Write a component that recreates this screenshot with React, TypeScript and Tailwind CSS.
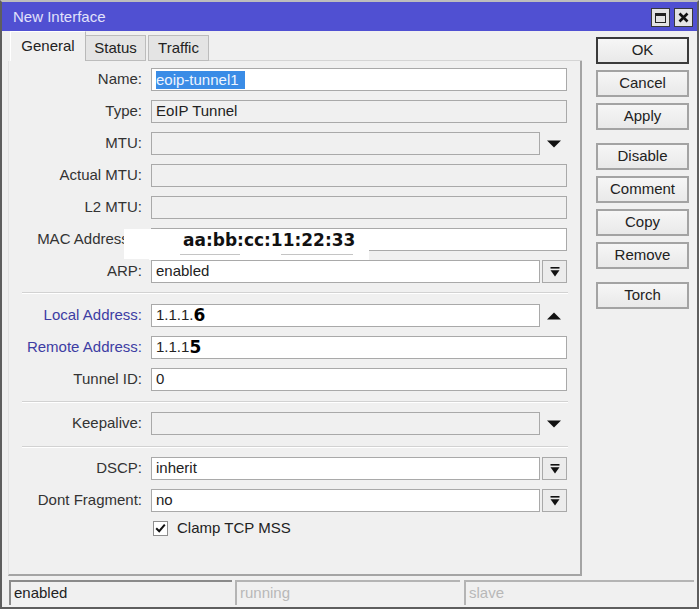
import React from "react";

function DownTri() {
  return (
    <svg width="14" height="8" viewBox="0 0 14 8">
      <path d="M0 0.5H14L7 7.5Z" fill="#111" />
    </svg>
  );
}
function UpTri() {
  return (
    <svg width="14" height="8" viewBox="0 0 14 8">
      <path d="M0 7.5H14L7 0.5Z" fill="#111" />
    </svg>
  );
}
function DblDown() {
  return (
    <svg width="10" height="10" viewBox="0 0 10 10">
      <rect x="0.5" y="0" width="9" height="1.6" fill="#111" />
      <path d="M0.5 3.2H9.5L5 9.5Z" fill="#111" />
    </svg>
  );
}

function Label({ children, blue }: { children: React.ReactNode; blue?: boolean }) {
  return (
    <div
      className={`w-[133px] shrink-0 text-right whitespace-nowrap ${blue ? "text-[#3d3da3]" : "text-[#333]"}`}
    >
      {children}
    </div>
  );
}

function Box({ children, white, narrow }: { children?: React.ReactNode; white?: boolean; narrow?: boolean }) {
  return (
    <div
      className={`${narrow ? "w-[389px]" : "w-[416px]"} h-[23px] border border-[#a9a9a9] ${white ? "bg-white" : "bg-[#f0f0f0]"} flex items-center pl-[4px] text-[15px] text-[#222] whitespace-nowrap overflow-hidden`}
    >
      {children}
    </div>
  );
}

function SideBtn() {
  return (
    <div className="ml-[2px] w-[25px] h-[23px] border border-[#a9a9a9] bg-[#ececec] flex items-center justify-center">
      <DblDown />
    </div>
  );
}
function SideTri({ up }: { up?: boolean }) {
  return (
    <div className="w-[27px] h-[23px] flex items-center justify-center">{up ? <UpTri /> : <DownTri />}</div>
  );
}

function Sep({ cls }: { cls: string }) {
  return <div className={`ml-[13px] w-[546px] h-[2px] border-t border-t-[#d2d2d2] border-b border-b-white ${cls}`} />;
}

function Btn({ children, cls, ok }: { children: React.ReactNode; cls?: string; ok?: boolean }) {
  return (
    <div
      className={`w-[93px] h-[27px] flex items-center justify-center text-[15px] text-[#222] bg-gradient-to-b from-[#f6f6f6] to-[#e9e9e9] ${ok ? "border-2 border-[#3a3a3a]" : "border-2 border-[#a3a3a3]"} ${cls || ""}`}
    >
      {children}
    </div>
  );
}

export default function App() {
  return (
    <div className="w-[700px] h-[613px] bg-white font-['Liberation_Sans',Arial,sans-serif]">
      <div className="w-[699px] h-[609px] border-2 border-[#5e5e5e] border-t-[#bdbdbd] bg-[#f0f0f0] flex flex-col">
        {/* Title bar */}
        <div className="h-[29px] shrink-0 bg-[#5050d2] flex items-center justify-between pl-[11px] pr-[4px] pt-[2px]">
          <span className="text-[15px] text-[#e2e2fb]">New Interface</span>
          <div className="flex items-center gap-[4px]">
            <div className="w-[19px] h-[19px] bg-[#e4e4e4] border border-[#3a3a3a] flex items-center justify-center">
              <div className="w-[11px] h-[10px] border border-[#222] border-t-[3px]" />
            </div>
            <div className="w-[19px] h-[19px] bg-[#e4e4e4] border border-[#3a3a3a] flex items-center justify-center">
              <svg width="11" height="11" viewBox="0 0 11 11">
                <path d="M1.5 1.5L9.5 9.5M9.5 1.5L1.5 9.5" stroke="#111" strokeWidth="2.6" />
              </svg>
            </div>
          </div>
        </div>

        {/* Main */}
        <div className="h-[547px] shrink-0 flex">
          {/* Left column */}
          <div className="ml-[6px] w-[574px] flex flex-col">
            {/* Tabs */}
            <div className="h-[30px] flex items-end">
              <div className="ml-[2px] w-[76px] h-[30px] bg-[#f0f0f0] border-t border-l border-t-white border-l-white border-r border-r-[#b9b9b9] flex items-center justify-center text-[15px] text-[#222]">
                General
              </div>
              <div className="w-[60px] h-[26px] bg-[#e4e4e4] border-t border-r border-b border-[#bcbcbc] flex items-center justify-center text-[15px] text-[#222]">
                Status
              </div>
              <div className="ml-[2px] w-[61px] h-[26px] bg-[#e4e4e4] border-t border-l border-r border-b border-[#bcbcbc] flex items-center justify-center text-[15px] text-[#222]">
                Traffic
              </div>
              <div className="flex-1 h-[1px] border-b border-[#d4d4d4]" />
            </div>
            {/* Panel */}
            <div className="h-[515px] border-l border-l-[#e2e2e2] border-r-2 border-r-[#a4a4a4] border-b-2 border-b-[#a4a4a4] pt-[7px] flex flex-col text-[15px]">
              <div className="flex items-center h-[23px]">
                <Label>Name:</Label>
                <div className="ml-[9px]">
                  <Box white>
                    <span className="bg-[#3a8ce6] text-[#eef5ff] pr-[6px] leading-[18px]">eoip-tunnel1</span>
                  </Box>
                </div>
              </div>
              <div className="flex items-center h-[23px] mt-[9px]">
                <Label>Type:</Label>
                <div className="ml-[9px]">
                  <Box>EoIP Tunnel</Box>
                </div>
              </div>
              <div className="flex items-center h-[23px] mt-[9px]">
                <Label>MTU:</Label>
                <div className="ml-[9px] flex">
                  <Box narrow />
                  <SideTri />
                </div>
              </div>
              <div className="flex items-center h-[23px] mt-[9px]">
                <Label>Actual MTU:</Label>
                <div className="ml-[9px]">
                  <Box />
                </div>
              </div>
              <div className="flex items-center h-[23px] mt-[9px]">
                <Label>L2 MTU:</Label>
                <div className="ml-[9px]">
                  <Box />
                </div>
              </div>
              <div className="flex items-center h-[23px] mt-[9px] relative">
                <div className="w-[133px] shrink-0 text-right pr-[9px] text-[#333] whitespace-nowrap">MAC Address:</div>
                <div className="ml-[9px]">
                  <Box white />
                </div>
                {/* white smudge over label tail / input edge */}
                <div className="absolute left-[115px] top-[1px] w-[35px] h-[30px] bg-white" />
                <div className="absolute left-[142px] top-[4px] w-[20px] h-[28px] bg-white" />
                <div className="absolute left-[140px] top-[20px] w-[220px] h-[12px] bg-white" />
                <div className="absolute left-[171px] top-[26px] w-[60px] h-[1px] bg-[#c4c4c4]" />
                <div className="absolute left-[272px] top-[26px] w-[72px] h-[1px] bg-[#c4c4c4]" />
                <div className="absolute left-[174px] top-[1px] text-[17px] font-bold text-[#111] font-['DejaVu_Sans',sans-serif] leading-[22px]">
                  aa:bb:cc:11:22:33
                </div>
              </div>
              <div className="flex items-center h-[23px] mt-[9px]">
                <Label>ARP:</Label>
                <div className="ml-[9px] flex">
                  <Box white narrow>
                    enabled
                  </Box>
                  <SideBtn />
                </div>
              </div>
              <Sep cls="mt-[9px]" />
              <div className="flex items-center h-[23px] mt-[10px]">
                <Label blue>Local Address:</Label>
                <div className="ml-[9px] flex">
                  <Box white narrow>
                    1.1.1.<b className="text-[17px] text-black font-['DejaVu_Sans',sans-serif]">6</b>
                  </Box>
                  <SideTri up />
                </div>
              </div>
              <div className="flex items-center h-[23px] mt-[9px]">
                <Label blue>Remote Address:</Label>
                <div className="ml-[9px]">
                  <Box white>
                    1.1.1<b className="text-[17px] text-black font-['DejaVu_Sans',sans-serif]">5</b>
                  </Box>
                </div>
              </div>
              <div className="flex items-center h-[23px] mt-[9px]">
                <Label>Tunnel ID:</Label>
                <div className="ml-[9px]">
                  <Box white>0</Box>
                </div>
              </div>
              <Sep cls="mt-[10px]" />
              <div className="flex items-center h-[23px] mt-[9px]">
                <Label>Keepalive:</Label>
                <div className="ml-[9px] flex">
                  <Box narrow />
                  <SideTri />
                </div>
              </div>
              <Sep cls="mt-[11px]" />
              <div className="flex items-center h-[23px] mt-[9px]">
                <Label>DSCP:</Label>
                <div className="ml-[9px] flex">
                  <Box white narrow>
                    inherit
                  </Box>
                  <SideBtn />
                </div>
              </div>
              <div className="flex items-center h-[23px] mt-[9px]">
                <Label>Dont Fragment:</Label>
                <div className="ml-[9px] flex">
                  <Box white narrow>
                    no
                  </Box>
                  <SideBtn />
                </div>
              </div>
              <div className="flex items-center h-[16px] mt-[8px] pl-[144px]">
                <div className="w-[15px] h-[15px] border border-[#8e8e8e] bg-white flex items-center justify-center">
                  <svg width="11" height="10" viewBox="0 0 11 10">
                    <path d="M1.2 5.2L4.2 8.2L9.8 1.6" stroke="#111" strokeWidth="2" fill="none" />
                  </svg>
                </div>
                <span className="ml-[9px] text-[15px] text-[#222]">Clamp TCP MSS</span>
              </div>
            </div>
          </div>
          {/* Right buttons */}
          <div className="ml-[14px] pt-[6px] flex flex-col gap-[6px]">
            <Btn ok>OK</Btn>
            <Btn>Cancel</Btn>
            <Btn>Apply</Btn>
            <Btn cls="mt-[7px]">Disable</Btn>
            <Btn>Comment</Btn>
            <Btn>Copy</Btn>
            <Btn>Remove</Btn>
            <Btn cls="mt-[7px]">Torch</Btn>
          </div>
        </div>

        {/* Status bar */}
        <div className="h-[29px] shrink-0 flex pt-[2px] text-[15px]">
          <div className="ml-[7px] w-[223px] h-[25px] border-t-2 border-l-2 border-[#8a8a8a] flex items-center pl-[3px] text-[#222]">
            enabled
          </div>
          <div className="ml-[3px] w-[225px] h-[25px] border-t-2 border-l-2 border-[#b4b4b4] flex items-center pl-[3px] text-[#b8b8b8]">
            running
          </div>
          <div className="ml-[4px] w-[230px] h-[25px] border-t-2 border-l-2 border-[#b4b4b4] flex items-center pl-[3px] text-[#b8b8b8]">
            slave
          </div>
        </div>
      </div>
    </div>
  );
}
